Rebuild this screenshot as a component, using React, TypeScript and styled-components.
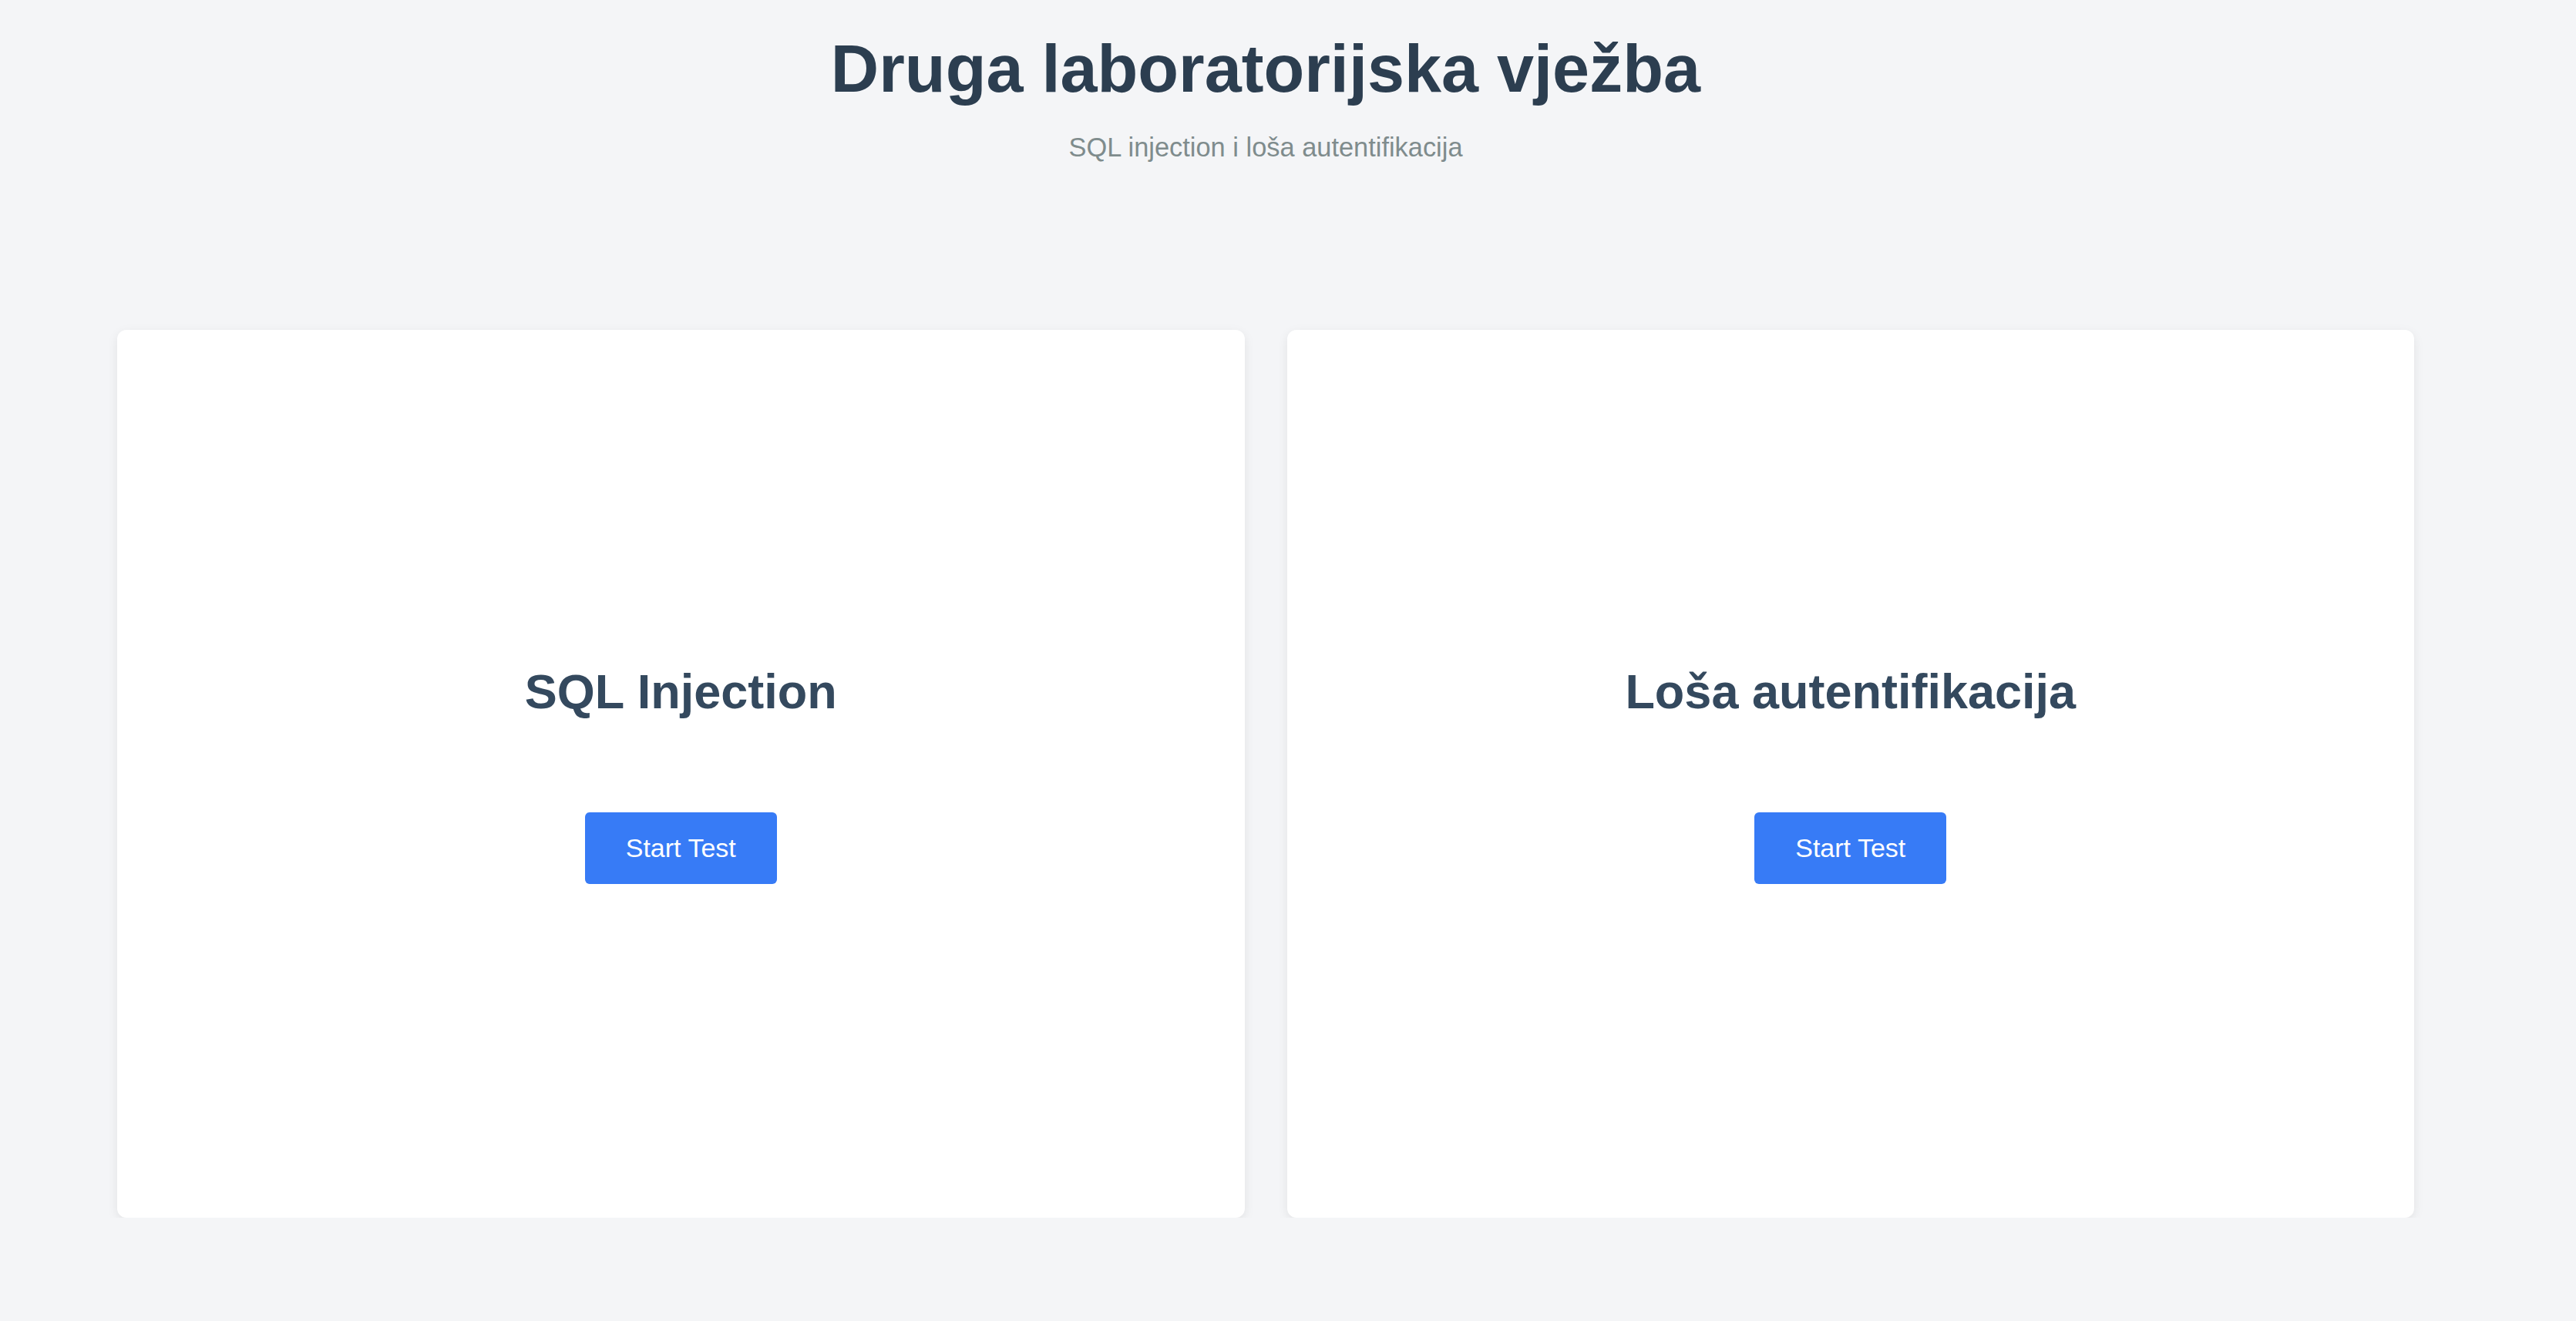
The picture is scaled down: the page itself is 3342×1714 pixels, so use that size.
import React from "react";
import styled, { createGlobalStyle } from "styled-components";

const GlobalStyle = createGlobalStyle`
  html, body {
    margin: 0;
    padding: 0;
    background: #f4f5f7;
    font-family: "Liberation Sans", Arial, sans-serif;
  }
  * { box-sizing: border-box; }
`;

const Page = styled.main`
  padding: 40px 210px 0 152px;
  display: flex;
  flex-direction: column;
  align-items: stretch;
`;

const Header = styled.header`
  display: flex;
  flex-direction: column;
  align-items: center;
  gap: 33px;
`;

const Title = styled.h1`
  margin: 0;
  font-size: 86.4px;
  line-height: 99px;
  font-weight: 700;
  color: #2c3e50;
`;

const Subtitle = styled.p`
  margin: 0;
  font-size: 34.4px;
  line-height: 39px;
  color: #7f8c8d;
`;

const CardGrid = styled.section`
  margin-top: 217px;
  display: grid;
  grid-template-columns: 1fr 1fr;
  gap: 55px;
`;

const Card = styled.article`
  height: 1152px;
  background: #ffffff;
  border-radius: 12px;
  box-shadow: 0 4px 14px rgba(0, 0, 0, 0.08);
  display: flex;
  flex-direction: column;
  align-items: center;
  justify-content: center;
  gap: 122px;
`;

const CardTitle = styled.h2`
  margin: 0;
  font-size: 63px;
  line-height: 70px;
  font-weight: 700;
  color: #34495e;
`;

const StartButton = styled.button`
  border: none;
  border-radius: 6px;
  background: #377bf6;
  color: #ffffff;
  font-family: "Liberation Sans", Arial, sans-serif;
  font-size: 34px;
  line-height: 39px;
  padding: 27px 53px;
  cursor: pointer;
`;

const tests = [
  { id: "sql", title: "SQL Injection" },
  { id: "auth", title: "Loša autentifikacija" },
];

export default function App() {
  return (
    <>
      <GlobalStyle />
      <Page>
        <Header>
          <Title>Druga laboratorijska vježba</Title>
          <Subtitle>SQL injection i loša autentifikacija</Subtitle>
        </Header>
        <CardGrid>
          {tests.map((t) => (
            <Card key={t.id}>
              <CardTitle>{t.title}</CardTitle>
              <StartButton>Start Test</StartButton>
            </Card>
          ))}
        </CardGrid>
      </Page>
    </>
  );
}
